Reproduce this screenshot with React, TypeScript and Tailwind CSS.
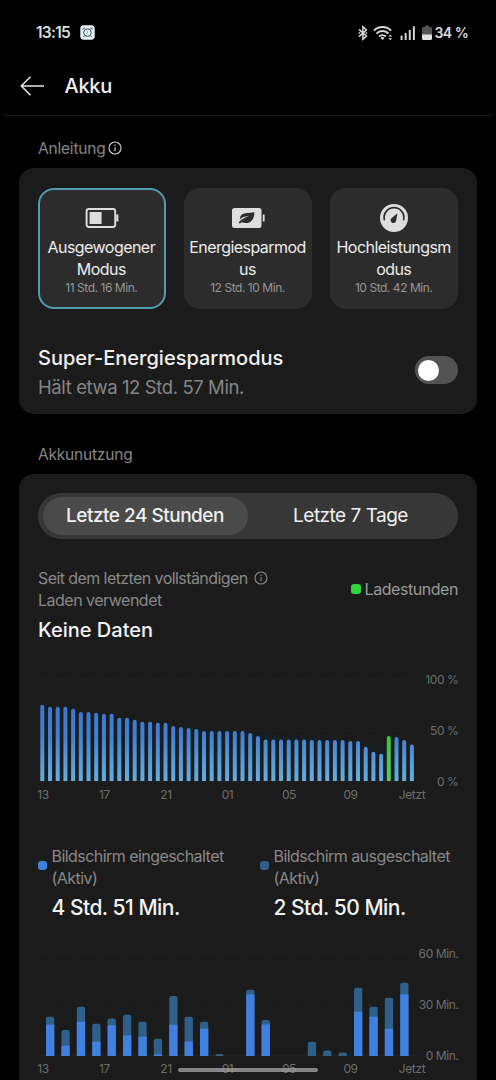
import React from "react";

// battery level every 30 minutes, bar heights in px
const levels = [
  76.3, 74.3, 74.3, 74.3, 72.3, 69, 69, 68.3, 67.3, 67.3, 63.3, 63.3, 61.3,
  59.3, 59.3, 58.3, 58.3, 55, 54, 53, 52, 50, 50, 50, 50, 50, 50, 48, 45, 41.6,
  41.6, 41.6, 41.6, 41.6, 41.6, 41, 41, 41, 41, 41, 40, 40, 34.3, 29.3, 27.3,
  45, 44, 41, 36.6,
];
const chargingIndex = 45;

// [total, screen on] per hour
const usage = [
  [39.3, 31.3], [26, 10.3], [49.3, 34.3], [32.3, 14.3], [37.6, 30.6],
  [41.3, 20.6], [34.3, 19.3], [17.3, 1.6], [60, 31.3], [39.3, 14.3],
  [34.3, 27.3], [2, 0], [0, 0], [66.3, 61.6], [36, 31.6], [0, 0], [0, 0],
  [14.3, 0], [5.6, 0], [3.6, 0], [68.3, 44.3], [49.3, 39.3], [58.3, 27.3],
  [73.3, 61.6],
];

const hours = ["13", "17", "21", "01", "05", "09", "Jetzt"];

function InfoIcon({ className }: { className: string }) {
  return (
    <svg viewBox="0 0 14 14" className={className} fill="none" stroke="currentColor">
      <circle cx="7" cy="7" r="6" strokeWidth="1.1" />
      <path d="M7 6.3v3.9" strokeWidth="1.2" />
      <circle cx="7" cy="4.3" r=".75" fill="currentColor" stroke="none" />
    </svg>
  );
}

function StatusBar() {
  return (
    <div className="flex h-[65px] items-center justify-between pl-[36px] pr-[29px] text-[#dcdcdc]">
      <div className="flex items-center gap-[10px]">
        <span className="text-[15.5px] font-semibold tracking-[-0.7px]">13:15</span>
        <svg width="15" height="15" viewBox="0 0 15 15">
          <rect x=".3" y=".3" width="14.4" height="14.4" rx="3.4" fill="#e4f1f8" />
          <g fill="none" stroke="#33424c">
            <circle cx="7.5" cy="7.6" r="3.8" strokeWidth="1" />
            <path d="M7.5 5.9v1.9L6.4 8.6" stroke="#5d96b5" strokeWidth=".9" />
            <path d="M3 4.6 3.2 3.2 4.8 3M12 4.6l-.2-1.4-1.6-.2M4.3 10.9l-1 1.2M10.7 10.9l1 1.2" strokeWidth=".9" />
          </g>
        </svg>
      </div>
      <div className="flex items-center">
        <svg width="10" height="16" viewBox="0 0 10 16" fill="none" stroke="currentColor" strokeWidth="1.5">
          <path d="M1 4.4 8.4 11 4.9 14.3V1.7L8.4 5 1 11.6" />
          <path d="M.6 8h1.6M7.6 8h1.6" />
        </svg>
        <svg className="ml-[5.5px]" width="20" height="16" viewBox="0 0 20 16" fill="none" stroke="currentColor" strokeWidth="1.9">
          <path d="M.9 5.6a12.2 12.2 0 0 1 17.2 0" />
          <path d="M3.5 8.6a8.5 8.5 0 0 1 12-.1" />
          <path d="M6.1 11.5a4.8 4.8 0 0 1 6.8 0" />
          <path d="M9.5 15.1 7.5 13a2.8 2.8 0 0 1 4 0Z" fill="currentColor" stroke="none" />
          <path d="M17.3 9.6 19.2 11.6h-3.8ZM17.3 15.2l-1.9-2h3.8Z" fill="currentColor" stroke="none" />
        </svg>
        <svg className="ml-[6.5px]" width="16" height="16" viewBox="0 0 16 16" fill="currentColor">
          <rect x=".6" y="10.6" width="1.9" height="4.4" />
          <rect x="4.7" y="8" width="1.9" height="7" />
          <rect x="8.8" y="5" width="1.9" height="10" />
          <rect x="12.9" y="1.3" width="1.9" height="13.7" />
        </svg>
        <svg className="ml-[6.5px]" width="10" height="16" viewBox="0 0 10 16">
          <path d="M1.5 2H3V.6h4V2h1.5q1.5 0 1.5 1.5V10H0V3.5Q0 2 1.5 2Z" fill="#555" />
          <path d="M0 9.5h10v4q0 1.5-1.5 1.5h-7Q0 15 0 13.5Z" fill="#e2e2e2" />
        </svg>
        <span className="ml-[2.5px] w-[32.5px] whitespace-nowrap text-[14px] font-semibold tracking-[-0.7px] [word-spacing:0.5px]">34 %</span>
      </div>
    </div>
  );
}

function Mode({ icon, lines, time, active }: { icon: React.ReactNode; lines: string[]; time: string; active?: boolean }) {
  return (
    <div
      className={`flex h-[121px] flex-1 flex-col items-center rounded-[16px] border-2 bg-[#2c2c2c] pt-[11px] ${
        active ? "border-[#529dad]" : "border-[#2c2c2c]"
      }`}
    >
      <div className="mb-px flex h-[34px] items-center">{icon}</div>
      {lines.map((line) => (
        <p key={line} className="-ml-px h-[22px] whitespace-nowrap text-[16px] leading-[22px] tracking-[-0.55px] text-[#ececec]">
          {line}
        </p>
      ))}
      <p className="-ml-px whitespace-nowrap text-[12px] leading-[16px] tracking-[-0.45px] text-[#979797]">{time}</p>
    </div>
  );
}

const BalancedIcon = (
  <svg width="34" height="22" viewBox="0 0 34 22">
    <rect x="1.6" y="2" width="28.6" height="18" rx="2.2" fill="none" stroke="#dedede" strokeWidth="1.9" />
    <rect x="4.6" y="5" width="12" height="12" fill="#dedede" />
    <path d="M31.2 7.5h2.2v7h-2.2Z" fill="#dedede" />
  </svg>
);

const SavingIcon = (
  <svg width="34" height="22" viewBox="0 0 34 22">
    <rect x="1" y="1" width="29.5" height="20" rx="2.5" fill="#dedede" />
    <path d="M31.8 7.5h1.8v7h-1.8Z" fill="#dedede" />
    <path d="M23.5 5.2C17.5 6.4 8.8 4.6 9 12.4c3.200-3 6-2.800 9.300-3.300-3.600 1.700-6.700 2-10.700 6.500l1.100 1 2-1.300c6.400 1.900 12.300.2 12.800-10.100Z" fill="#2c2c2c" />
  </svg>
);

const PowerIcon = (
  <svg width="28" height="28" viewBox="0 0 28 28">
    <circle cx="14" cy="14" r="14" fill="#dedede" />
    <path d="M4.3 15.6a9.9 9.9 0 1 1 19.4 0" fill="none" stroke="#2c2c2c" strokeWidth="1.7" strokeLinecap="round" />
    <path d="M17.4 9.2 16.2 16.3a2.8 2.8 0 1 1-5-1.8Z" fill="#2c2c2c" />
  </svg>
);

function ChartGrid({ labels }: { labels: string[] }) {
  return (
    <>
      {[10.3, 61.3, 112.3].map((y, i) => (
        <g key={y}>
          <path d={`M0 ${y - 1}H377`} stroke="#252525" strokeDasharray={i === 2 ? "none" : "3 3"} />
          <text x="420.5" y={y + 4} fontSize="12" letterSpacing="-0.4" textAnchor="end" fill="#6e6e6e">
            {labels[i]}
          </text>
        </g>
      ))}
      {hours.map((hour, i) => (
        <text key={hour} x={5 + i * 61.5} y="128.7" fontSize="12" letterSpacing="-0.4" textAnchor="middle" fill="#6e6e6e">
          {hour}
        </text>
      ))}
    </>
  );
}

function LevelChart() {
  return (
    <svg width="422" height="134" viewBox="0 0 422 134" className="overflow-visible">
      <defs>
        <linearGradient id="level" gradientUnits="userSpaceOnUse" x1="0" y1="35" x2="0" y2="111">
          <stop offset="0" stopColor="#3b76cf" />
          <stop offset=".4" stopColor="#4480ce" />
          <stop offset="1" stopColor="#68aedb" />
        </linearGradient>
        <linearGradient id="charge" x1="0" y1="0" x2="0" y2="1">
          <stop offset="0" stopColor="#35c637" />
          <stop offset="1" stopColor="#5dc962" />
        </linearGradient>
      </defs>
      <ChartGrid labels={["100 %", "50 %", "0 %"]} />
      <path d="M1 111V36L120 55 250 66 376 76V111Z" fill="#10202f" opacity=".4" />
      {levels.map((h, i) => {
        const x = 2.3 + i * 7.7;
        return (
          <path
            key={i}
            d={`M${x} 111V${113 - h}q0-2 2-2t2 2V111Z`}
            fill={i === chargingIndex ? "url(#charge)" : "url(#level)"}
          />
        );
      })}
    </svg>
  );
}

function UsageChart() {
  return (
    <svg width="422" height="134" viewBox="0 0 422 134" className="overflow-visible">
      <ChartGrid labels={["60 Min.", "30 Min.", "0 Min."]} />
      {usage.map(([total, on], i) => {
        const x = 8 + i * 15.4;
        const r = Math.min(2, total);
        return (
          <g key={i}>
            {total > 0 && (
              <path d={`M${x} 112V${112 - total + r}q0-${r} ${r}-${r}h${8.3 - 2 * r}q${r} 0 ${r} ${r}V112Z`} fill="#2f6089" />
            )}
            <rect x={x} y={112 - on} width="8.3" height={on} fill="#3f80e0" />
          </g>
        );
      })}
    </svg>
  );
}

function ScreenTime({ color, title, time }: { color: string; title: string; time: string }) {
  return (
    <div className="flex w-[222px] shrink-0 gap-[4.5px]">
      <span className={`mt-[16px] size-[9px] shrink-0 rounded-[3px] ${color}`} />
      <div className="whitespace-nowrap">
        <p className="text-[16px] leading-[22px] tracking-[-0.55px] text-[#898989]">
          {title}
          <br />
          (Aktiv)
        </p>
        <p className="mt-[5px] text-[21px] font-medium leading-[28px] tracking-[-0.5px] text-[#f2f2f2]">{time}</p>
      </div>
    </div>
  );
}

function App() {
  return (
    <div className="relative h-[1080px] w-[496px] overflow-hidden bg-black font-['Inter',sans-serif]">
      <StatusBar />
      <header className="flex h-[51px] items-center pb-[9px] pl-[20px]">
        <svg width="25" height="20" viewBox="0 0 25 20" fill="none" stroke="#e8e8e8" strokeWidth="1.5">
          <path d="M10.5 .8 1.3 10l9.2 9.2M1.3 10H24" />
        </svg>
        <h1 className="ml-[19.5px] text-[20px] font-medium tracking-[-0.3px] text-[#f0f0f0]">Akku</h1>
      </header>
      <div className="mx-[3px] -mt-px h-px bg-[#1d1d1d]" />

      <div className="flex h-[52px] items-center pl-[38px] pt-[13px] text-[15.5px] text-[#858585]">
        <span className="tracking-[-0.2px]">Anleitung</span>
        <InfoIcon className="-mt-px ml-[2.5px] size-[14px] text-[#d0d0d0]" />
      </div>

      <section className="mx-[19px] h-[246px] rounded-[15px] bg-[#1b1b1b] px-[19px] pt-[20px]">
        <div className="flex gap-[18.5px]">
          <Mode active icon={BalancedIcon} lines={["Ausgewogener", "Modus"]} time="11 Std. 16 Min." />
          <Mode icon={SavingIcon} lines={["Energiesparmod", "us"]} time="12 Std. 10 Min." />
          <Mode icon={PowerIcon} lines={["Hochleistungsm", "odus"]} time="10 Std. 42 Min." />
        </div>
        <div className="mt-[35px] flex justify-between">
          <div>
            <p className="text-[20px] font-medium leading-[29px] text-[#f0f0f0]">Super-Energiesparmodus</p>
            <p className="text-[18.5px] leading-[29px] tracking-[-0.4px] text-[#868686]">Hält etwa 12 Std. 57 Min.</p>
          </div>
          <button className="mt-[12px] flex h-[28px] w-[43px] items-center rounded-full bg-[#535353] pl-[3px]">
            <span className="size-[21px] rounded-full bg-white" />
          </button>
        </div>
      </section>

      <div className="flex h-[60px] items-center pl-[38px] pt-[21px] text-[15.5px] tracking-[-0.2px] text-[#858585]">
        Akkunutzung
      </div>

      <section className="mx-[19px] h-[640px] rounded-[15px] bg-[#1b1b1b] px-[19px] pt-[18.5px]">
        <div className="flex h-[46.5px] items-center rounded-full bg-[#373737] px-[4.5px] text-center text-[19px] tracking-[-0.5px] text-[#f0f0f0]">
          <div className="h-[37.5px] w-[205px] rounded-full bg-[#4a4a4a] font-medium leading-[38px]">Letzte 24 Stunden</div>
          <div className="flex-1 leading-[38px]">Letzte 7 Tage</div>
        </div>

        <div className="mt-[28px] flex h-[78px] justify-between">
          <div>
            <p className="whitespace-nowrap text-[16px] leading-[22px] tracking-[-0.58px] text-[#898989]">
              Seit dem letzten vollständigen
              <InfoIcon className="ml-[6px] inline size-[14px] align-[-1px]" />
              <br />
              <span className="tracking-[-0.5px]">Laden verwendet</span>
            </p>
            <p className="mt-[5px] text-[20px] font-medium leading-[28px] text-[#f2f2f2]">Keine Daten</p>
          </div>
          <div className="flex h-[22px] items-center gap-[4px] pt-[22px]">
            <span className="size-[10px] rounded-[3px] bg-[#32d33d]" />
            <span className="text-[16px] tracking-[-0.45px] text-[#999]">Ladestunden</span>
          </div>
        </div>

        <div className="mt-[25px] h-[134px]">
          <LevelChart />
        </div>

        <div className="mt-[41px] flex h-[78px]">
          <ScreenTime color="bg-[#3f80e0]" title="Bildschirm eingeschaltet" time="4 Std. 51 Min." />
          <ScreenTime color="bg-[#2f6089]" title="Bildschirm ausgeschaltet" time="2 Std. 50 Min." />
        </div>

        <div className="mt-[21px] h-[134px]">
          <UsageChart />
        </div>
      </section>

      {/* gesture bar */}
      <div className="absolute bottom-[8px] left-[178px] h-[4.5px] w-[139.5px] rounded-full bg-[#a0a0a0]/80" />
    </div>
  );
}

export default App;
